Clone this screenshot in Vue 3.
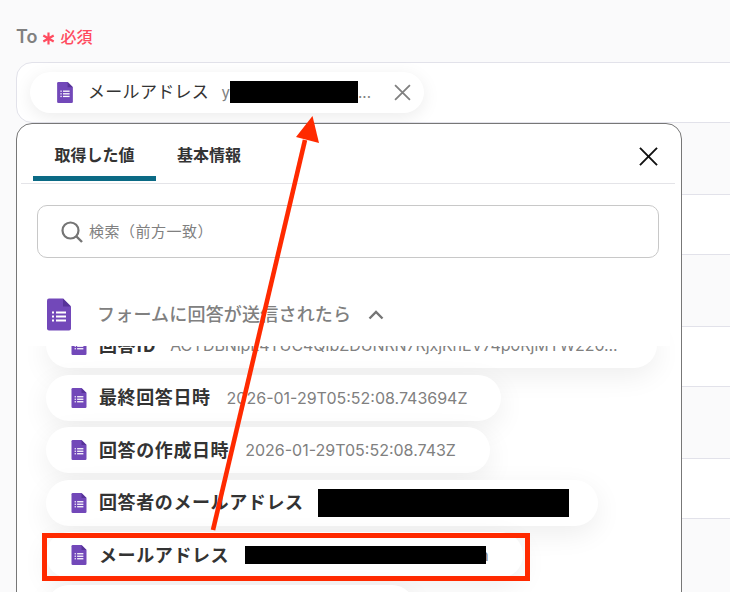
<script setup>
const rows = [
  { name: '回答ID', value: 'ACYDBNipL4TUC4QIbZDUNRN7RjxjKhEV74p0RjMYW220...', cls: 'r-first' },
  { name: '最終回答日時', value: '2026-01-29T05:52:08.743694Z', cls: 'r-a' },
  { name: '回答の作成日時', value: '2026-01-29T05:52:08.743Z', cls: 'r-b' },
  { name: '回答者のメールアドレス', redact: 'bar-a', cls: 'r-c' },
  { name: 'メールアドレス', redact: 'bar-b', tail: 'n', cls: 'r-d' },
  { name: '', value: '', cls: 'r-e' }
]
const fields = [0, 1, 2, 3]
</script>

<template>
  <div class="page">
    <svg class="defs" width="0" height="0" aria-hidden="true">
      <symbol id="forms" viewBox="0 0 24 32">
        <path d="M2 0H16L24 8V30a2 2 0 0 1-2 2H2a2 2 0 0 1-2-2V2a2 2 0 0 1 2-2Z" fill="#7248b9" />
        <path d="M16 0L24 8H16Z" fill="#573399" />
        <g fill="#fff">
          <rect x="5" y="13" width="2" height="2" />
          <rect x="5" y="17" width="2" height="2" />
          <rect x="5" y="21" width="2" height="2" />
          <rect x="9" y="13" width="10" height="2" />
          <rect x="9" y="17" width="10" height="2" />
          <rect x="9" y="21" width="10" height="2" />
        </g>
      </symbol>
    </svg>

    <div class="label">
      <span class="to">To</span>
      <svg class="star" viewBox="0 0 12 12">
        <path d="M6 0.5V11.5M1.2 3.2L10.8 8.8M10.8 3.2L1.2 8.8" stroke="#ff4b5f" stroke-width="2" fill="none" />
      </svg>
      <span class="req">必須</span>
    </div>

    <div class="fields">
      <div v-for="f in fields" :key="f" class="field">
        <div v-if="f === 0" class="picked">
          <svg class="picked-icon"><use href="#forms" /></svg>
          <span class="picked-name">メールアドレス</span>
          <span class="picked-val">y</span>
          <span class="bar bar-main"></span>
          <span class="picked-val">...</span>
          <svg class="picked-x" viewBox="0 0 16 16">
            <path d="M1 1L15 15M15 1L1 15" stroke="#808080" stroke-width="1.7" fill="none" />
          </svg>
        </div>
      </div>
    </div>

    <div class="panel">
      <div class="tabs">
        <div class="tab tab-on">取得した値</div>
        <div class="tab">基本情報</div>
        <svg class="close" viewBox="0 0 20 20">
          <path d="M1 1L19 19M19 1L1 19" stroke="#111" stroke-width="2" fill="none" />
        </svg>
      </div>

      <div class="search">
        <svg class="search-icon" viewBox="0 0 22 22">
          <circle cx="9.5" cy="9.5" r="8" stroke="#757575" stroke-width="2.2" fill="none" />
          <path d="M15.5 15.5L21 21" stroke="#757575" stroke-width="2.4" fill="none" />
        </svg>
        <span>検索（前方一致）</span>
      </div>

      <div class="section">
        <svg class="section-icon"><use href="#forms" /></svg>
        <span class="section-name">フォームに回答が送信されたら</span>
        <svg class="chev" viewBox="0 0 16 10">
          <path d="M1.5 8.5L8 2L14.5 8.5" stroke="#757575" stroke-width="2.4" fill="none" />
        </svg>
      </div>

      <div class="list">
        <div v-for="r in rows" :key="r.cls" class="row" :class="r.cls">
          <svg class="row-icon"><use href="#forms" /></svg>
          <span class="row-name">{{ r.name }}</span>
          <span v-if="r.value" class="row-val">{{ r.value }}</span>
          <span v-if="r.redact" class="bar" :class="r.redact"></span>
          <span v-if="r.tail" class="row-val tail">{{ r.tail }}</span>
        </div>
      </div>
    </div>

    <div class="highlight"></div>
    <svg class="arrow" viewBox="0 0 730 592">
      <path d="M213 530L305 140" stroke="#ff2a00" stroke-width="4.6" fill="none" />
      <path d="M312.5 116L296 137L319 143Z" fill="#ff2a00" />
    </svg>
  </div>
</template>

<style>
html, body { margin: 0; background: #fafafb; }
</style>

<style scoped>
.page {
  position: relative;
  width: 730px;
  height: 592px;
  overflow: hidden;
  background: #fafafb;
  font-family: "Noto Sans CJK JP", "Inter", sans-serif;
  box-sizing: border-box;
  padding: 24px 0 0 16px;
}
.defs { position: absolute; }
.label {
  display: flex;
  align-items: center;
  height: 24px;
  margin-bottom: 14px;
}
.to {
  font-family: "Inter", sans-serif;
  font-weight: 600;
  font-size: 18px;
  color: #808080;
}
.star {
  width: 13px;
  height: 13px;
  margin: 4px 0 0 5px;
  flex: none;
}
.req {
  font-size: 16px;
  font-weight: 500;
  color: #ff4b5f;
  margin: -1px 0 0 5px;
}
.fields {
  display: flex;
  flex-direction: column;
  gap: 71px;
}
.field {
  width: 800px;
  height: 61px;
  box-sizing: border-box;
  background: #fff;
  border: 1px solid #e2e2ea;
  border-radius: 16px;
  padding: 9px 0 0 13px;
}
.picked {
  display: flex;
  align-items: center;
  width: 394px;
  height: 41px;
  box-sizing: border-box;
  padding-left: 27px;
  background: #fff;
  border-radius: 21px;
  box-shadow: 0 4px 18px rgba(0, 0, 0, 0.08);
}
.picked-icon { width: 16px; height: 21px; flex: none; }
.picked-name {
  margin: 0 0 4px 15px;
  font-size: 17px;
  letter-spacing: 0.3px;
  color: #333;
}
.picked-val {
  font-family: "Inter", sans-serif;
  font-size: 15px;
  color: #808080;
}
.picked-name + .picked-val { margin-left: 12.5px; }
.picked-x { width: 17px; height: 17px; margin-left: 23px; flex: none; }
.bar { display: block; position: relative; z-index: 1; background: #000; flex: none; }
.bar-main { width: 128px; height: 22px; margin-bottom: 2px; }
.bar-a { width: 251px; height: 28px; margin-left: 14.5px; }
.bar-b { width: 241px; height: 18px; margin-left: 16px; }

.panel {
  position: absolute;
  left: 16px;
  top: 123px;
  width: 666px;
  height: 490px;
  box-sizing: border-box;
  background: #fff;
  border: 1px solid #777;
  border-radius: 16px;
  overflow: hidden;
}
.tabs {
  position: relative;
  display: flex;
  height: 60px;
  margin: 0 6px 0 4px;
  padding-left: 12px;
  border-bottom: 1px solid #e4e4e8;
  box-sizing: border-box;
}
.tab {
  display: flex;
  align-items: center;
  justify-content: center;
  height: 57px;
  padding: 8px 21px 0;
  box-sizing: border-box;
  font-size: 16px;
  font-weight: 600;
  color: #333;
  border-bottom: 5px solid transparent;
}
.tab-on {
  width: 123px;
  padding: 8px 0 0;
  border-bottom-color: #0b6a85;
  border-radius: 5px 5px 0 0;
}
.close {
  position: absolute;
  right: 17px;
  top: 23px;
  width: 19px;
  height: 19px;
}
.search {
  display: flex;
  align-items: center;
  height: 53px;
  box-sizing: border-box;
  margin: 21px 22px 0 20px;
  padding-left: 23px;
  border: 1px solid #c8c8c8;
  border-radius: 10px;
  font-size: 15px;
  letter-spacing: 0.5px;
  color: #808080;
}
.search span { margin-bottom: 2px; }
.search-icon { width: 22px; height: 22px; margin-right: 6px; flex: none; }
.section {
  position: relative;
  z-index: 2;
  display: flex;
  align-items: center;
  height: 66px;
  margin: 22px 11px 0 0;
  padding: 0 0 0 30px;
  background: #fff;
}
.section-icon { width: 24px; height: 33px; flex: none; margin-top: 2px; }
.section-name {
  margin: 0 0 1px 26px;
  font-size: 18px;
  letter-spacing: 0.2px;
  font-weight: 500;
  color: #808080;
}
.chev { width: 16px; height: 10px; margin: 3px 0 0 17px; flex: none; }
.list {
  display: flex;
  flex-direction: column;
  align-items: flex-start;
  gap: 6.5px;
  margin-top: -24px;
  padding-left: 29px;
}
.row {
  display: flex;
  align-items: center;
  flex: none;
  height: 46px;
  box-sizing: border-box;
  padding-left: 25px;
  background: #fff;
  border-radius: 23px;
  box-shadow: 0 8px 28px rgba(0, 0, 0, 0.07);
  white-space: nowrap;
}
.row-icon { width: 16px; height: 20px; flex: none; }
.row-name {
  margin: 0 0 3px 12px;
  font-size: 18px;
  letter-spacing: 0.6px;
  font-weight: 600;
  color: #333;
}
.row-val {
  margin-left: 16px;
  font-family: "Inter", sans-serif;
  font-size: 16px;
  color: #808080;
}
.r-first .row-val {
  margin-left: 14px;
  letter-spacing: -0.1px;
}
.bar + .row-val.tail { margin-left: -7px; }
.r-first { width: 611px; }
.r-a { width: 455px; }
.r-b { width: 444px; }
.r-c { width: 552px; }
.r-d { width: 477px; }
.r-e { width: 369px; }

.highlight {
  position: absolute;
  z-index: 3;
  left: 42px;
  top: 533px;
  width: 488px;
  height: 48px;
  box-sizing: border-box;
  border: 5px solid #ff2a00;
}
.arrow {
  position: absolute;
  z-index: 4;
  left: 0;
  top: 0;
  width: 730px;
  height: 592px;
  pointer-events: none;
}
</style>
